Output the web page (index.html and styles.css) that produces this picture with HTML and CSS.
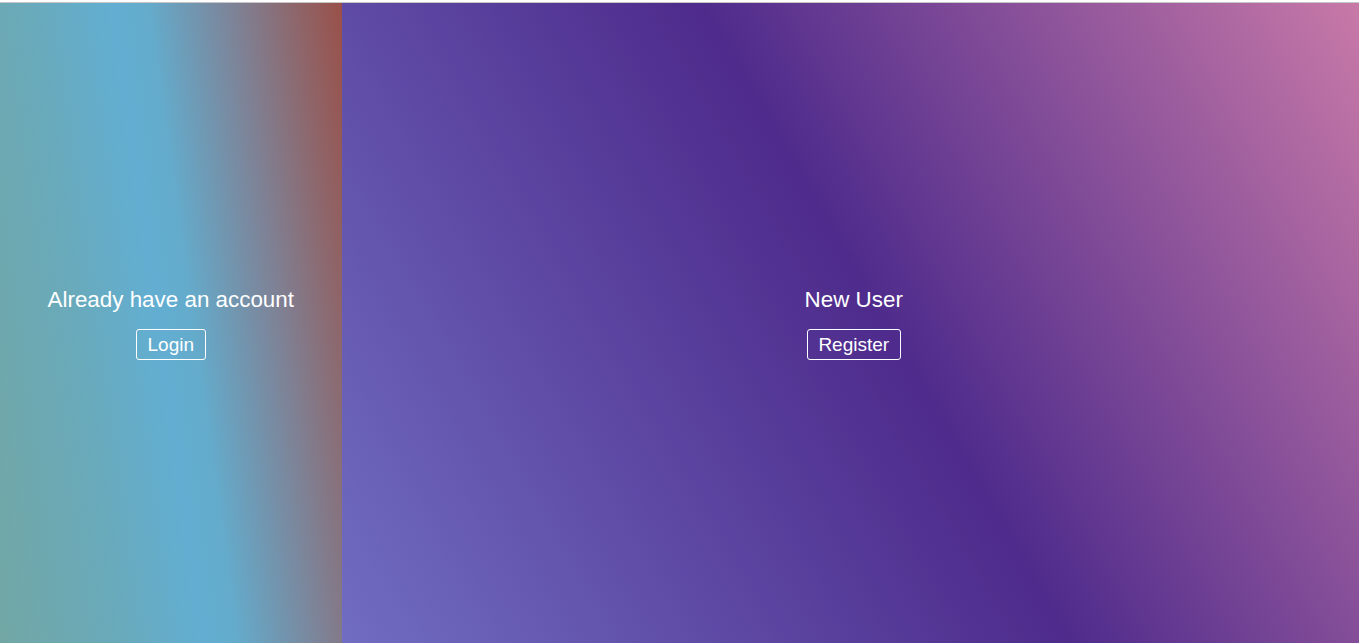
FILE: index.html
```html
<!DOCTYPE html>
<html lang="en">
<head>
<meta charset="utf-8">
<title>Welcome</title>
<link rel="stylesheet" href="styles.css">
</head>
<body>
<div class="page">
  <section class="panel panel-login">
    <h2 class="panel-title">Already have an account</h2>
    <button class="panel-btn" type="button">Login</button>
  </section>
  <section class="panel panel-register">
    <h2 class="panel-title">New User</h2>
    <button class="panel-btn" type="button">Register</button>
  </section>
</div>
</body>
</html>
```
FILE: styles.css
```css
html, body {
  margin: 0;
  padding: 0;
  background: #ffffff;
  overflow: hidden;
}

body {
  font-family: "Liberation Sans", Arial, sans-serif;
}

.page {
  display: flex;
  width: 1366px;
  height: 640px;
  margin-top: 2px;
  border-top: 1px solid #c6c6c6;
}

.panel {
  display: flex;
  flex-direction: column;
  align-items: center;
  justify-content: center;
  color: #ffffff;
  padding-top: 1px;
  box-sizing: border-box;
}

.panel-login {
  width: 25%;
  background: linear-gradient(82deg, #72a7a5 0%, #69aabb 28%, #62aed2 47%, #64abcb 55%, #7e8296 75%, #9a5049 100%);
}

.panel-register {
  width: 75%;
  background: linear-gradient(60deg, #706dc2 0%, #4e2b8c 52%, #c97aa8 100%);
}

.panel-title {
  margin: 0 0 16px;
  font-size: 22.4px;
  font-weight: normal;
  line-height: 26px;
}

.panel-btn {
  font-family: "Liberation Sans", Arial, sans-serif;
  font-size: 19px;
  line-height: 21px;
  padding: 4px 10.5px;
  color: #ffffff;
  background: transparent;
  border: 1px solid #ffffff;
  border-radius: 3px;
  cursor: pointer;
}
```
